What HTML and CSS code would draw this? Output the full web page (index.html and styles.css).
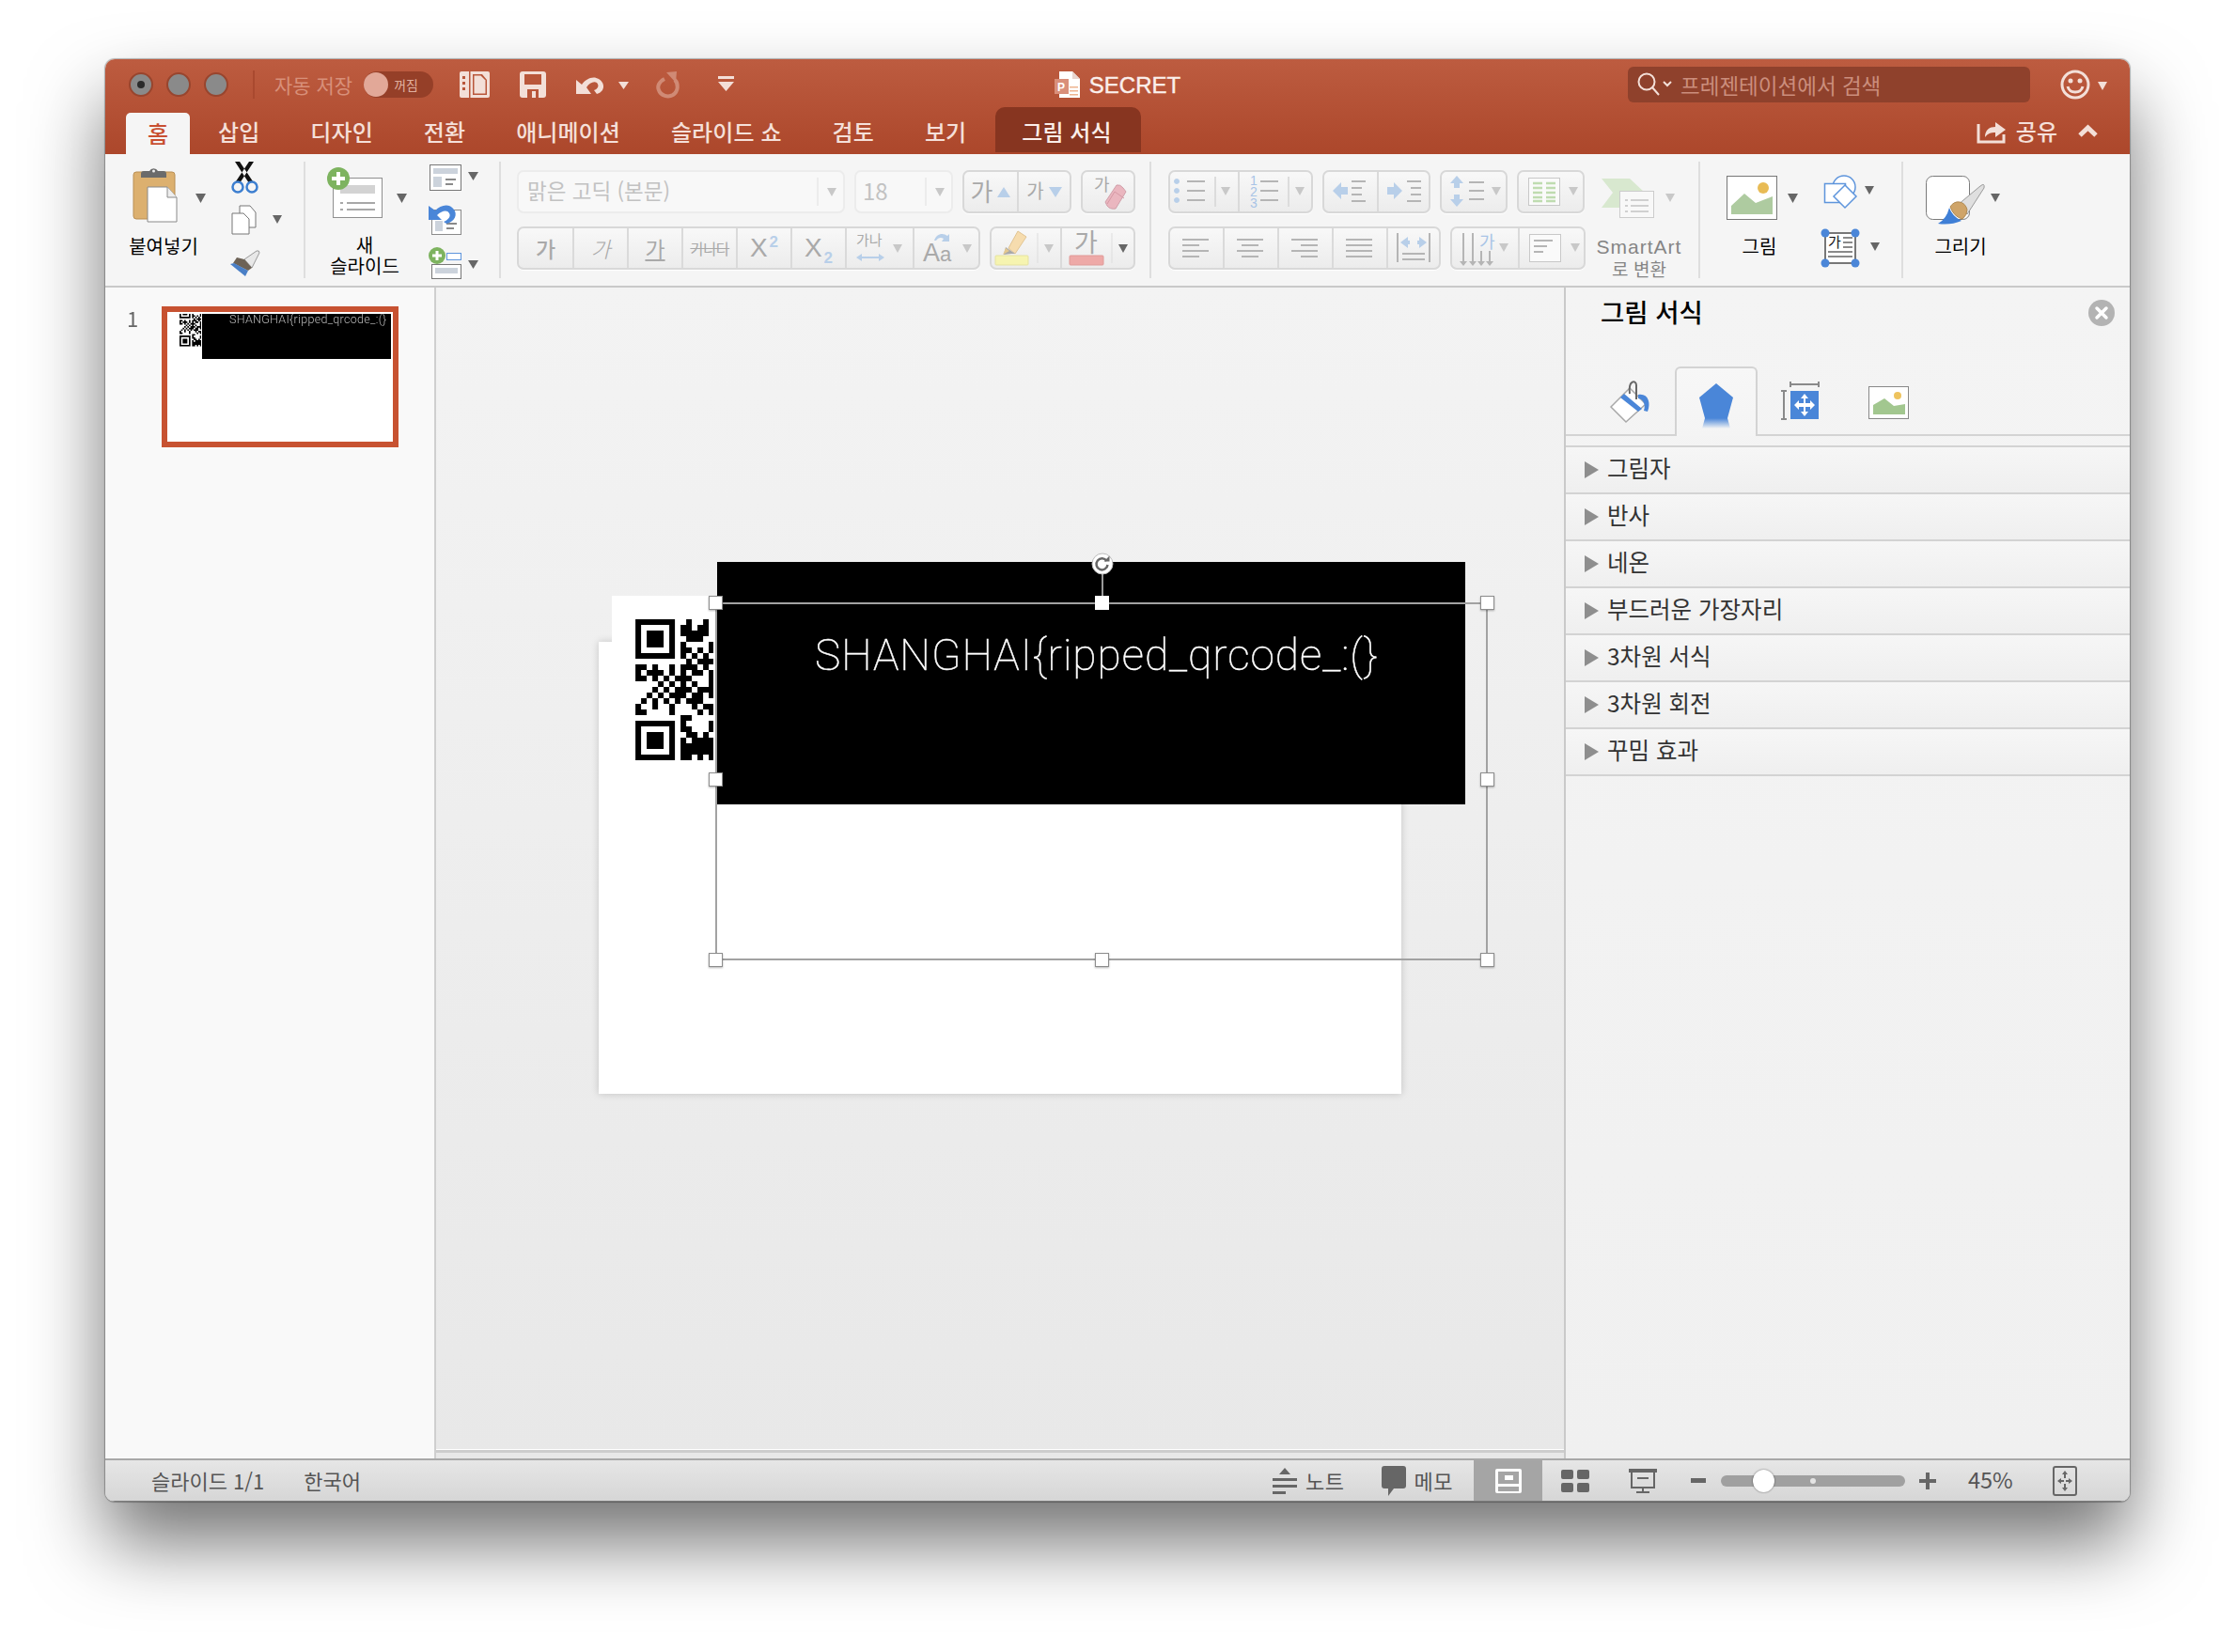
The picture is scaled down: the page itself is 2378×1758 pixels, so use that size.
FILE: index.html
```html
<!DOCTYPE html>
<html lang="ko">
<head>
<meta charset="utf-8">
<title>SECRET</title>
<link rel="stylesheet" href="styles.css">
</head>
<body>
<svg class="defs" width="0" height="0">
  <defs>
    <symbol id="qr" viewBox="0 0 13.8 25">
      <path class="qr-path" d="M0 .5h7M9 .5h1M12 .5h1M0 1.5h1M6 1.5h1M8 1.5h2M11 1.5h2M0 2.5h1M2 2.5h3M6 2.5h1M8 2.5h5M0 3.5h1M2 3.5h3M6 3.5h1M9 3.5h3M0 4.5h1M2 4.5h3M6 4.5h1M8 4.5h1M13 4.5h1M0 5.5h1M6 5.5h1M8 5.5h2M11 5.5h1M13 5.5h1M0 6.5h7M8 6.5h1M10 6.5h1M12 6.5h1M9 7.5h1M11 7.5h2M13 7.5h1M0 8.5h2M3 8.5h1M6 8.5h1M8 8.5h3M12 8.5h1M0 9.5h1M2 9.5h3M6 9.5h1M8 9.5h1M10 9.5h2M13 9.5h1M0 10.5h2M3 10.5h1M5 10.5h1M7 10.5h3M13 10.5h1M4 11.5h1M6 11.5h1M8 11.5h1M10 11.5h1M13 11.5h1M3 12.5h1M5 12.5h1M7 12.5h3M11 12.5h3M2 13.5h1M4 13.5h1M6 13.5h3M10 13.5h2M13 13.5h1M1 14.5h1M3 14.5h1M5 14.5h1M7 14.5h1M9 14.5h3M0 15.5h1M3 15.5h1M6 15.5h1M10 15.5h1M12 15.5h2M0 16.5h2M6 16.5h1M11 16.5h1M13 16.5h1M8 17.5h2M0 18.5h7M8 18.5h1M13 18.5h1M0 19.5h1M6 19.5h1M8 19.5h2M13 19.5h1M0 20.5h1M2 20.5h3M6 20.5h1M9 20.5h2M12 20.5h1M0 21.5h1M2 21.5h3M6 21.5h1M8 21.5h1M10 21.5h4M0 22.5h1M2 22.5h3M6 22.5h1M8 22.5h6M0 23.5h1M6 23.5h1M8 23.5h6M0 24.5h7M8 24.5h2M11 24.5h1M13 24.5h1"/>
    </symbol>
    <linearGradient id="fade" x1="0" y1="0" x2="0" y2="1">
      <stop offset="0" stop-color="#4a86d8"/>
      <stop offset="1" stop-color="#4a86d8" stop-opacity="0"/>
    </linearGradient>
  </defs>
</svg>

<div class="window">
  <header class="titlebar">
    <div class="toprow">
      <div class="top-left">
        <span class="light light-on"></span>
        <span class="light"></span>
        <span class="light"></span>
        <span class="tb-sep"></span>
        <span class="autosave">자동 저장</span>
        <span class="toggle"><i class="knob"></i><b>꺼짐</b></span>
        <svg class="qa-layout" width="32" height="28"><path class="tb-w" d="M2 0h28a2 2 0 0 1 2 2v24a2 2 0 0 1-2 2H2a2 2 0 0 1-2-2V2a2 2 0 0 1 2-2z"/><path class="tb-r" d="M10 0h1.500v28H10zM14 3h10l5 6v16H14zM3 5h3v3H3zM3 11h3v3H3zM3 17h3v3H3z"/><path class="tb-w" d="M15.500 4.500h7l5 5v14h-12z"/></svg>
        <svg class="qa-save" width="28" height="28"><path class="tb-w" d="M3 0h22a3 3 0 0 1 3 3v22a3 3 0 0 1-3 3H3a3 3 0 0 1-3-3V3a3 3 0 0 1 3-3z"/><path class="tb-r" d="M5 3h18v11H5zM8 19h12v9H8z"/><path class="tb-w" d="M13 21h4v7h-4z"/></svg>
        <svg class="qa-undo" width="60" height="24"><path class="tb-w" d="M0 22V7l6 5C10 6 18 2 24 6c8 5 6 14-2 16l-3-4c4-1 6-5 3-8-3-2-8 0-11 5l5 7z"/><path class="tb-w" d="M45 9h11l-5.500 8z"/></svg>
        <svg class="qa-redo" width="28" height="28"><path class="tb-dim-s" d="M9 8C3 11 1 16 3 20c2 6 10 8 15 5 6-4 6-12 2-16"/><path class="tb-dim" d="M11 1l11-1-1 12z"/></svg>
        <svg class="qa-more" width="17" height="18"><path class="tb-w" d="M0 0h17v3H0zM0 6h17l-8.500 10z"/></svg>
      </div>
      <div class="doc-title">
        <svg width="27" height="28"><path class="white" d="M5 0h14l8 8v20H5z"/><path class="doc-fold" d="M19 0v8h8z"/><path class="doc-p" d="M0 8h15v16H0z"/><path class="doc-line" d="M16 16h9v1.500h-9zM16 20h9v1.500h-9zM16 24h9v1.500h-9z"/><text x="3" y="21" class="doc-letter">P</text></svg>
        <span>SECRET</span>
      </div>
      <div class="top-right">
        <div class="search">
          <svg width="42" height="28"><circle class="tb-s" cx="11" cy="11" r="8.500"/><path class="tb-s" d="M17 17l7 8M29 11l4 4 4-4"/></svg>
          <span>프레젠테이션에서 검색</span>
        </div>
        <svg class="smile" width="50" height="32"><circle class="tb-s2" cx="16" cy="16" r="14"/><circle class="tb-f" cx="11" cy="12" r="2.500"/><circle class="tb-f" cx="21" cy="12" r="2.500"/><path class="tb-s2" d="M8 18c2 8 14 8 16 0"/><path class="tb-w" d="M40 13h10l-5 9z"/></svg>
      </div>
    </div>
    <nav class="tabrow">
      <a class="tab tab-home">홈</a>
      <a class="tab">삽입</a>
      <a class="tab">디자인</a>
      <a class="tab">전환</a>
      <a class="tab">애니메이션</a>
      <a class="tab">슬라이드 쇼</a>
      <a class="tab">검토</a>
      <a class="tab">보기</a>
      <a class="tab tab-context">그림 서식</a>
      <div class="share">
        <svg width="30" height="26"><path class="tb-s2" d="M1 6v19h27v-8"/><path class="tb-w" d="M8 20c0-8 5-11 11-11V4l11 8-11 8v-5c-5 0-8 1-11 5z"/></svg>
        <span>공유</span>
        <svg class="chev" width="21" height="13"><path class="tb-s3" d="M2 11l8.500-8 8.500 8"/></svg>
      </div>
    </nav>
  </header>

  <section class="ribbon">
    <div class="group g-clip">
      <div class="big w-124">
        <svg width="124" height="70">
          <rect x="30" y="11" width="44" height="50" rx="3" fill="#dcb06f" stroke="#b98f55"/>
          <path d="M38 17v-4a3 3 0 0 1 3-3h6a5 5 0 0 1 9 0h6a3 3 0 0 1 3 3v4z" fill="#6b6b6b"/>
          <circle cx="51.500" cy="10" r="1.500" fill="#eee"/>
          <path d="M45 27h21l10 11v26H45z" fill="#fff" stroke="#8a8a8a"/>
          <path d="M66 27v11h10" fill="#eee" stroke="#8a8a8a"/>
          <path class="c-dark" d="M96 34h11l-5.500 10z"/>
        </svg>
        <span class="lbl">붙여넣기</span>
      </div>
      <div class="col-small col-clip">
        <svg width="60" height="36">
          <path d="M10 0l15 23 4-2L15 0zM30 0L15 23l-4-2L25 0z" fill="#111"/>
          <circle cx="13" cy="27" r="5.500" fill="none" stroke="#3d7fd0" stroke-width="2.500"/>
          <circle cx="28" cy="27" r="5.500" fill="none" stroke="#3d7fd0" stroke-width="2.500"/>
        </svg>
        <svg width="60" height="36">
          <path d="M15 3h11l6 7v16H15z" fill="#fff" stroke="#777"/>
          <path d="M7 11h12l6 6v16H7z" fill="#fff" stroke="#777"/>
          <path class="c-dark" d="M50 13h10l-5 9z"/>
        </svg>
        <svg width="60" height="32">
          <path d="M20 12L33 3q3-1 3 2L28 21z" fill="#e8e8e8" stroke="#999"/>
          <path d="M12 10l8 2 8 9-4 3L8 16z" fill="#6d6256"/>
          <path d="M5 17l4-1 15 8-3 6z" fill="#4a7fc6"/>
        </svg>
      </div>
    </div>

    <div class="group g-slide">
      <div class="big w-126">
        <svg width="126" height="70">
          <rect x="29.500" y="17.500" width="52" height="42" fill="#fff" stroke="#8f8f8f"/>
          <rect x="37" y="25" width="37" height="9" fill="#d3d3d3"/>
          <path d="M37 43h3v2h-3zM44 43h30v2H44zM37 50h3v2h-3zM44 50h30v2H44z" fill="#a8a8a8"/>
          <circle cx="35" cy="18" r="12" fill="#7db35f"/>
          <path d="M33 11h4v5h5v4h-5v5h-4v-5h-5v-4h5z" fill="#fff"/>
          <path class="c-dark" d="M97 34h11l-5.500 10z"/>
        </svg>
        <span class="lbl lbl-stack">새<br>슬라이드</span>
      </div>
      <div class="col-small col-slide">
        <svg width="62" height="34">
          <rect x="6.500" y="3.500" width="33" height="27" fill="#fff" stroke="#777"/>
          <rect x="10" y="7" width="26" height="6" fill="#ccd3dc"/>
          <rect x="10" y="16" width="9" height="11" fill="#ccd3dc"/>
          <path d="M23 18h11v2H23zM23 23h8v2h-8z" fill="#8a8a8a"/>
          <path class="c-dark" d="M47 11h11l-5.500 9z"/>
        </svg>
        <svg width="62" height="38">
          <rect x="8.500" y="9.500" width="31" height="26" fill="#fff" stroke="#8a8a8a"/>
          <rect x="12" y="21" width="8" height="11" fill="#ccd3dc"/>
          <path d="M24 23h11v2H24zM24 28h8v2h-8z" fill="#8a8a8a"/>
          <path d="M5 5v15h14l-5-5c5-5 11-6 13-2 2 3-1 7-6 9l3 2c9-2 12-10 8-15-5-7-14-5-20 1z" fill="#4a86d8"/>
        </svg>
        <svg width="62" height="40">
          <rect x="8.500" y="21.500" width="31" height="15" fill="#fff" stroke="#777"/>
          <rect x="12" y="25" width="24" height="6" fill="#ccd3dc"/>
          <rect x="24.500" y="9.500" width="15" height="7" fill="#fff" stroke="#5e95dc"/>
          <circle cx="14" cy="12" r="9" fill="#7db35f"/>
          <path d="M12.500 7h3v3.500H19v3h-3.500V17h-3v-3.500H9v-3h3.500z" fill="#fff"/>
          <path class="c-dark" d="M47 17h11l-5.500 9z"/>
        </svg>
      </div>
    </div>

    <div class="group g-font rows">
      <div class="brow">
        <div class="combo combo-font"><span>맑은 고딕 (본문)</span><i class="combo-div"></i><svg width="10" height="9"><path class="c-dim" d="M0 0h10l-5 9z"/></svg></div>
        <div class="combo combo-size"><span>18</span><i class="combo-div"></i><svg width="10" height="9"><path class="c-dim" d="M0 0h10l-5 9z"/></svg></div>
        <div class="bgroup">
          <div class="cell w-56"><span class="g g-26 lift">가</span><svg width="14" height="11"><path class="b-dim" d="M7 0l7 11H0z"/></svg></div>
          <div class="cell w-56"><span class="g g-20 lift">가</span><svg width="14" height="11"><path class="b-dim" d="M0 0h14L7 11z"/></svg></div>
        </div>
        <div class="bgroup">
          <div class="cell w-54"><svg width="54" height="42"><text class="g-text" x="12" y="20">가</text><path d="M24 32l12-18q4-1 7 3l3 4-11 18q-6 1-9-3z" fill="#eab6bf" stroke="#d0a0aa"/><path d="M26 34l8-13 10 7" fill="none" stroke="#d699a5"/></svg></div>
        </div>
      </div>
      <div class="brow">
        <div class="bgroup">
          <div class="cell w-57"><span class="g g-24 fat">가</span></div>
          <div class="cell w-58"><span class="g g-24 slant">가</span></div>
          <div class="cell w-58"><span class="g g-24 under">가</span></div>
          <div class="cell w-58"><span class="g g-18 strike">가나다</span></div>
          <div class="cell w-58"><span class="g g-28">X<sup class="blue">2</sup></span></div>
          <div class="cell w-58"><span class="g g-28">X<sub class="blue">2</sub></span></div>
          <div class="cell w-72"><svg width="72" height="42"><text class="g-text-sm" x="11" y="18">가나</text><path class="b-dim" d="M11 31l6-4v3h18v-3l6 4-6 4v-3H17v3z"/><path class="c-dim" d="M50 17h10l-5 9z"/></svg></div>
          <div class="cell w-70"><svg width="70" height="42"><text class="g-aa" x="10" y="35">A</text><text class="g-aa-s" x="28" y="35">a</text><path d="M22 13c2-7 9-9 14-5l2-2v8h-8l2-3c-3-2-6-1-8 2z" fill="#b8cfe9"/><path class="c-dim" d="M52 17h10l-5 9z"/></svg></div>
        </div>
        <div class="bgroup">
          <div class="cell w-73"><svg width="73" height="42"><rect x="4" y="29" width="35" height="10" rx="1" fill="#f6f4b0" stroke="#e6e3a0"/><path d="M18 21L28 3l9 6-12 18z" fill="#f6dcae" stroke="#e0c493"/><path d="M15 20l10 7-4 0-8 1z" fill="#a8a8a8"/><path d="M12 28l3-7 4 3z" fill="#e3c88f"/><path d="M49 5v32" stroke="#ddd" fill="none"/><path class="c-dim" d="M56 17h10l-5 9z"/></svg></div>
          <div class="cell w-78"><svg width="78" height="42"><text class="g-text-lg" x="14" y="25">가</text><rect x="9" y="29" width="36" height="10" rx="1" fill="#eea9a7" stroke="#e09a98"/><path d="M54 5v32" stroke="#ddd" fill="none"/><path class="c-dark" d="M61 17h10l-5 9z"/></svg></div>
        </div>
      </div>
    </div>

    <div class="group g-para">
      <div class="rows">
        <div class="brow">
          <div class="bgroup">
            <div class="cell w-72"><svg width="72" height="42"><path class="blue-f" d="M7 7a3 3 0 1 0 .01 0M7 17a3 3 0 1 0 .01 0M7 27a3 3 0 1 0 .01 0"/><path class="ln" d="M18 10h19M18 20h19M18 30h19"/><path class="dv" d="M48 5v32"/><path class="c-dim" d="M54 16h10l-5 9z"/></svg></div>
            <div class="cell w-78"><svg width="76" height="42"><text class="num" x="11" y="14">1</text><text class="num" x="11" y="26">2</text><text class="num" x="11" y="38">3</text><path class="ln" d="M22 10h19M22 20h19M22 30h19"/><path class="dv" d="M52 5v32"/><path class="c-dim" d="M59 16h10l-5 9z"/></svg></div>
          </div>
          <div class="bgroup">
            <div class="cell w-56"><svg width="56" height="42"><path class="blue-f" d="M9 20l9-9v5h7v8h-7v5z"/><path class="ln" d="M29 10h15M29 17h11M29 24h11M29 31h15"/></svg></div>
            <div class="cell w-55"><svg width="53" height="42"><path class="blue-f" d="M25 20l-9-9v5H9v8h7v5z"/><path class="ln" d="M30 10h15M34 17h11M34 24h11M30 31h15"/></svg></div>
          </div>
          <div class="bgroup">
            <div class="cell w-68"><svg width="68" height="42"><path class="blue-f" d="M16 4l7 8h-4v5h-6v-5H9zM16 37l-7-8h4v-5h6v5h4z"/><path class="ln" d="M29 11h16M29 20h16M29 29h16"/><path class="c-dim" d="M53 16h10l-5 9z"/></svg></div>
          </div>
          <div class="bgroup">
            <div class="cell w-68"><svg width="68" height="42"><rect x="10.500" y="6.500" width="33" height="29" fill="#fafafa" stroke="#c8c8c8"/><path class="green-l" d="M15 12h10M29 12h10M15 17h10M29 17h10M15 22h10M29 22h10M15 27h10M29 27h10M15 31h10M29 31h10"/><path class="c-dim" d="M53 16h10l-5 9z"/></svg></div>
          </div>
        </div>
        <div class="brow">
          <div class="bgroup">
            <div class="cell w-56"><svg width="56" height="42"><path class="ln" d="M13 12h28M13 18h18M13 24h28M13 30h18"/></svg></div>
            <div class="cell w-58"><svg width="56" height="42"><path class="ln" d="M13 12h28M18 18h18M13 24h28M18 30h18"/></svg></div>
            <div class="cell w-58"><svg width="56" height="42"><path class="ln" d="M13 12h28M23 18h18M13 24h28M23 30h18"/></svg></div>
            <div class="cell w-58"><svg width="56" height="42"><path class="ln" d="M13 12h28M13 18h28M13 24h28M13 30h28"/></svg></div>
            <div class="cell w-56"><svg width="54" height="42"><path class="ln" d="M10 5v31M44 5v31M15 27h24M15 33h24"/><path class="blue-f" d="M13 15l8-6v4h2v4h-2v4zM41 15l-8-6v4h-2v4h2v4z"/></svg></div>
          </div>
          <div class="bgroup">
            <div class="cell w-70"><svg width="70" height="42"><path class="ln" d="M12 5v32M22 5v32M31 24v13M40 24v13"/><path class="arrow-d" d="M8 35h8l-4 5zM18 35h8l-4 5zM27 35h8l-4 5zM36 35h8l-4 5z"/><text class="g-blue" x="29" y="21">가</text><path class="c-dim" d="M50 16h10l-5 9z"/></svg></div>
            <div class="cell w-70"><svg width="68" height="42"><rect x="10.500" y="6.500" width="33" height="29" fill="#fafafa" stroke="#c8c8c8"/><path class="ln" d="M15 13h20M15 19h14M15 25h10"/><path class="c-dim" d="M54 16h10l-5 9z"/></svg></div>
          </div>
        </div>
      </div>
      <div class="big w-114">
        <svg width="114" height="70">
          <path d="M17 18h30l16 15-16 16H17l12-16z" fill="#d8e8cf"/>
          <rect x="36.500" y="31.500" width="36" height="28" fill="#f8f8f8" stroke="#ccc"/>
          <path d="M42 40h3v2h-3zM48 40h19v2H48zM42 46h3v2h-3zM48 46h19v2H48zM42 52h3v2h-3zM48 52h19v2H48z" fill="#d0d0d0"/>
          <path class="c-dim" d="M85 34h10l-5 9z"/>
        </svg>
        <span class="lbl lbl-gray"><span class="lbl-latin">SmartArt</span><br>로 변환</span>
      </div>
    </div>

    <div class="group g-pic">
      <div class="big w-126">
        <svg width="126" height="70">
          <rect x="28.500" y="15.500" width="53" height="46" fill="#fff" stroke="#777"/>
          <path d="M33 56V47l14-13 12 10 18-7v19z" fill="#aecba0"/>
          <circle cx="67" cy="28" r="6" fill="#e8bb55"/>
          <path class="c-dark" d="M93 34h11l-5.500 10z"/>
        </svg>
        <span class="lbl">그림</span>
      </div>
      <div class="col-small col-pic">
        <svg width="66" height="50">
          <circle cx="27" cy="27" r="12" fill="#fff" stroke="#5e95dc" stroke-width="1.500"/>
          <rect x="6.500" y="23.500" width="22" height="20" fill="#fff" stroke="#5e95dc" stroke-width="1.500"/>
          <path d="M28 25l12 12-12 12-12-12z" fill="#fff" stroke="#5e95dc" stroke-width="1.500"/>
          <path class="c-dark" d="M49 26h10l-5 9z"/>
        </svg>
        <svg width="66" height="48">
          <rect x="7" y="8" width="32" height="32" fill="#fff" stroke="#777" stroke-width="2"/>
          <text class="g-black" x="10" y="23">가</text>
          <path class="ln-d" d="M26 13h10M26 18h10M26 23h10M10 28h26M10 33h26"/>
          <circle cx="7" cy="8" r="4.500" fill="#4a86d8"/><circle cx="39" cy="8" r="4.500" fill="#4a86d8"/><circle cx="7" cy="40" r="4.500" fill="#4a86d8"/><circle cx="39" cy="40" r="4.500" fill="#4a86d8"/>
          <path class="c-dark" d="M55 18h10l-5 9z"/>
        </svg>
      </div>
    </div>

    <div class="group g-draw">
      <div class="big w-122">
        <svg width="122" height="70">
          <rect x="24.500" y="15.500" width="46" height="46" rx="7" fill="#fff" stroke="#7a7a7a"/>
          <path d="M58 46l24-20q5-4 4 2L68 56z" fill="#dfdfdf" stroke="#9a9a9a"/>
          <path d="M50 48q4-6 10-5t8 8q0 6-5 10-9-2-13-13z" fill="#cfa468" stroke="#b08a52"/>
          <path d="M49 49q3 9 13 14-12 5-25 3 9-5 12-17z" fill="#3f7fd6"/>
          <path class="c-dark" d="M93 34h10l-5 9z"/>
        </svg>
        <span class="lbl">그리기</span>
      </div>
    </div>
  </section>

  <main class="work">
    <aside class="thumbs">
      <span class="thumb-no">1</span>
      <div class="thumb">
        <svg class="thumb-qr" width="23" height="36" viewBox="0 4.150 13.800 21.600"><use href="#qr" width="13.800" height="25"/></svg>
        <div class="thumb-black"><span>SHANGHAI{ripped_qrcode_:(}</span></div>
      </div>
    </aside>

    <div class="canvas">
      <div class="slide"></div>
      <div class="qr-paper"></div>
      <svg class="qr" width="83" height="150"><use href="#qr" width="83" height="150"/></svg>
      <div class="banner"><span>SHANGHAI{ripped_qrcode_:(}</span></div>
      <div class="selection">
        <i class="stem"></i>
        <svg class="rotate" width="24" height="24"><circle cx="12" cy="12" r="11" fill="#fff" stroke="#bbb"/><path d="M16.500 9a6 6 0 1 0 1 4" fill="none" stroke="#666" stroke-width="2.500"/><path d="M13.500 9.500h6v-6z" fill="#666"/></svg>
        <i class="h h-tl"></i><i class="h h-tc"></i><i class="h h-tr"></i>
        <i class="h h-ml"></i><i class="h h-mr"></i>
        <i class="h h-bl"></i><i class="h h-bc"></i><i class="h h-br"></i>
      </div>
      <div class="hscroll"></div>
    </div>

    <aside class="panel">
      <div class="panel-head">
        <h2>그림 서식</h2>
        <svg width="28" height="28"><circle cx="14" cy="14" r="14" fill="#b3b3b3"/><path d="M9 9l10 10M19 9L9 19" stroke="#fff" stroke-width="3.500" stroke-linecap="round"/></svg>
      </div>
      <div class="panel-tabs">
        <div class="ptab ptab-fill">
          <svg width="46" height="46"><path d="M1 29L21 9l17 17-21 19z" fill="#fff" stroke="#a8a8a8" stroke-width="1.500"/><path d="M11 19l4-4 19 16-4 3z" fill="#4a86d8"/><path d="M21 15C19 0 28 0 28 6v15" fill="none" stroke="#666" stroke-width="2"/><path d="M30 16c10-2 14 8 10 18l-4-1c2-6 0-12-6-13z" fill="#4a86d8"/></svg>
        </div>
        <div class="ptab ptab-on">
          <svg width="37" height="48"><path d="M18 0l18 15-6 22H6L0 15z" fill="#4a86d8"/><path d="M6 37h24l3 11H3z" fill="url(#fade)"/></svg>
        </div>
        <div class="ptab ptab-size">
          <svg width="42" height="42"><path d="M10 0v6M40 0v6M10 3h30M0 10h6M0 40h6M3 10v30" stroke="#8a8a8a" stroke-width="2" fill="none"/><rect x="10" y="10" width="30" height="30" fill="#4a86d8"/><path d="M25 13l4 5h-3v5h5v-3l5 5-5 5v-3h-5v5h3l-4 5-4-5h3v-5h-5v3l-5-5 5-5v3h5v-5h-3z" fill="#fff"/></svg>
        </div>
        <div class="ptab ptab-pic">
          <svg width="43" height="35"><rect x=".5" y=".5" width="42" height="34" fill="#fff" stroke="#888"/><path d="M5 30V20l12-7 10 8 12-2v11z" fill="#a2c78f"/><circle cx="31" cy="10" r="4" fill="#eec35e"/></svg>
        </div>
      </div>
      <ul class="sections">
        <li><i class="tri"></i><span>그림자</span></li>
        <li><i class="tri"></i><span>반사</span></li>
        <li><i class="tri"></i><span>네온</span></li>
        <li><i class="tri"></i><span>부드러운 가장자리</span></li>
        <li><i class="tri"></i><span>3차원 서식</span></li>
        <li><i class="tri"></i><span>3차원 회전</span></li>
        <li><i class="tri"></i><span>꾸밈 효과</span></li>
      </ul>
    </aside>
  </main>

  <footer class="status">
    <span class="st-slide">슬라이드 1/1</span>
    <span class="st-lang">한국어</span>
    <div class="st-notes">
      <svg width="26" height="30"><path class="st-f" d="M13 1l6 7H7zM0 12h26v3H0zM0 19h26v3H0zM0 26h14v3H0z"/></svg>
      <span>노트</span>
    </div>
    <div class="st-memo">
      <svg width="26" height="32"><path class="st-f" d="M3 0h20a3 3 0 0 1 3 3v18a3 3 0 0 1-3 3H13l-6 8v-8H3a3 3 0 0 1-3-3V3a3 3 0 0 1 3-3z"/></svg>
      <span>메모</span>
    </div>
    <div class="st-view">
      <svg width="28" height="26"><rect width="28" height="26" rx="2" fill="#fff"/><rect x="3" y="3" width="22" height="13" fill="#a5a5a5"/><rect x="10" y="7" width="9" height="5" fill="#fff"/><rect x="3" y="19" width="22" height="5" fill="#a5a5a5"/></svg>
    </div>
    <svg class="st-grid" width="30" height="26"><path class="st-f" d="M2 1h9a2 2 0 0 1 2 2v6a2 2 0 0 1-2 2H2a2 2 0 0 1-2-2V3a2 2 0 0 1 2-2zM19 1h9a2 2 0 0 1 2 2v6a2 2 0 0 1-2 2h-9a2 2 0 0 1-2-2V3a2 2 0 0 1 2-2zM2 15h9a2 2 0 0 1 2 2v6a2 2 0 0 1-2 2H2a2 2 0 0 1-2-2v-6a2 2 0 0 1 2-2zM19 15h9a2 2 0 0 1 2 2v6a2 2 0 0 1-2 2h-9a2 2 0 0 1-2-2v-6a2 2 0 0 1 2-2z"/></svg>
    <svg class="st-show" width="30" height="26"><path class="st-f" d="M0 0h30v4H0zM2 4h2v15h22V4h2v17H16v3h6v2H8v-2h6v-3H2zM9 9h12v2H9z"/></svg>
    <svg class="st-minus" width="16" height="6"><path class="st-f" d="M0 0h16v5H0z"/></svg>
    <div class="slider"><i class="slider-dot"></i><i class="slider-thumb"></i></div>
    <svg class="st-plus" width="18" height="18"><path class="st-f" d="M7 0h4v7h7v4h-7v7H7v-7H0V7h7z"/></svg>
    <span class="st-zoom">45%</span>
    <svg class="st-fit" width="26" height="32"><rect x="1" y="1" width="24" height="30" rx="2" fill="none" stroke="#666" stroke-width="2"/><path class="st-f" d="M13 5l3 4h-2v4h-2V9h-2zM13 27l-3-4h2v-4h2v4h2zM5 16l4-3v2h3v2H9v2zM21 16l-4 3v-2h-3v-2h3v-2z"/></svg>
    <i class="st-end"></i>
  </footer>
</div>
</body>
</html>
```

FILE: styles.css
```css
* { box-sizing: border-box; }
html, body { margin: 0; padding: 0; }
body {
  width: 2378px;
  height: 1758px;
  overflow: hidden;
  background: #fff;
  padding: 63px 112px 0;
  font-family: "Noto Sans CJK KR", "Liberation Sans", sans-serif;
  color: #000;
}
.defs { position: absolute; }
.qr-path { fill: none; stroke: #000; stroke-width: 1; }
svg { display: block; flex: none; overflow: visible; }

.window {
  width: 2154px;
  height: 1535px;
  border-radius: 10px;
  display: flex;
  flex-direction: column;
  overflow: hidden;
  box-shadow: 0 44px 80px rgba(0,0,0,.55), 0 0 1px 1px rgba(0,0,0,.28);
  background: #f5f5f5;
}

/* title bar */
.titlebar {
  height: 101px;
  flex: none;
  background: linear-gradient(#bd5c40, #ac472b);
  display: flex;
  flex-direction: column;
}
.toprow {
  height: 51px;
  padding-top: 3px;
  display: grid;
  grid-template-columns: 1fr auto 1fr;
  align-items: center;
}
.top-left { display: flex; align-items: center; padding-left: 25px; }
.light {
  width: 26px; height: 26px; border-radius: 50%;
  background: #8a8a8a;
  border: 2px solid #98452e;
  margin-right: 14px;
  position: relative;
}
.light-on::after {
  content: ""; position: absolute; left: 7px; top: 7px;
  width: 8px; height: 8px; border-radius: 50%; background: #2b2b2b;
}
.tb-sep { width: 2px; height: 30px; background: #a9492f; margin-left: 12px; }
.autosave { font-size: 21px; color: #d8907a; margin-left: 21px; line-height: 28px; white-space: nowrap; }
.toggle {
  width: 74px; height: 28px; border-radius: 14px;
  background: #953f28; margin-left: 12px;
  display: flex; align-items: center;
}
.knob { width: 26px; height: 26px; border-radius: 50%; background: #e2a898; }
.toggle b { font-weight: 400; font-size: 14px; color: #e0b0a0; margin-left: 6px; line-height: 1; }
.qa-layout { margin-left: 28px; }
.qa-save { margin-left: 32px; }
.qa-undo { margin-left: 32px; }
.qa-redo { margin-left: 25px; }
.qa-more { margin-left: 38px; }
.tb-w { fill: #f3dfd8; }
.tb-r { fill: #b9563a; }
.tb-dim { fill: #d08a75; }
.tb-dim-s { fill: none; stroke: #d08a75; stroke-width: 4; }
.tb-s { fill: none; stroke: #f3dfd8; stroke-width: 2; }
.tb-s2 { fill: none; stroke: #f3dfd8; stroke-width: 3; }
.tb-s3 { fill: none; stroke: #f3dfd8; stroke-width: 5; }
.tb-f { fill: #f3dfd8; }
.white { fill: #fff; }
.doc-fold { fill: #e8d5cf; }
.doc-p { fill: #d98f7a; }
.doc-line { fill: #eeb490; }
.doc-letter { font: 700 12px "Liberation Sans", sans-serif; fill: #fff; }

.doc-title { display: flex; align-items: center; gap: 10px; color: #fbf0ec; }
.doc-title span { font: 24px/28px "Liberation Sans", sans-serif; padding-top: 2px; -webkit-text-stroke: .4px #fbf0ec; }

.top-right { display: flex; align-items: center; justify-content: flex-end; padding-right: 24px; }
.search {
  width: 428px; height: 38px; border-radius: 6px;
  background: #8f412c;
  display: flex; align-items: center;
  padding-left: 9px;
}
.search span { font-size: 22.500px; color: #cb8e7d; margin-left: 5px; line-height: 38px; white-space: nowrap; }
.smile { margin-left: 32px; }

.tabrow { height: 50px; display: flex; align-items: flex-end; padding-left: 22px; }
.tab {
  height: 48px;
  margin-bottom: 2px;
  padding: 3px 27px 0;
  display: flex; align-items: center;
  font-size: 24px; line-height: 1;
  letter-spacing: .08px;
  font-weight: 500;
  color: #f5e0da;
  white-space: nowrap;
}
.tab-home {
  height: 44px; margin: 0 3px 0 0; padding: 0;
  width: 68px; justify-content: center;
  background: #f5f5f5; color: #c84f31;
  border-radius: 5px 5px 0 0;
}
.tab-context {
  margin-left: 4px; padding: 3px 31px 0 28px;
  background: #873520; color: #fbeee9;
  border-radius: 10px 10px 0 0;
}
.share {
  margin-left: auto; height: 50px; padding: 0 34px 0 0;
  display: flex; align-items: center; color: #f5e0da; font-size: 24px; font-weight: 500;
}
.share span { margin-left: 11px; line-height: 1; }
.chev { margin-left: 22px; }

/* ribbon */
.ribbon {
  height: 142px;
  flex: none;
  display: flex;
  background: #f5f5f5;
  border-bottom: 2px solid #c9c9c9;
  padding-top: 8px;
}
.group {
  height: 124px;
  display: flex;
  border-right: 2px solid #dedede;
}
.g-clip { width: 213px; }
.g-slide { width: 208px; }
.g-font { width: 692px; padding-left: 17px; }
.g-para { width: 584px; padding-left: 18px; }
.g-pic { width: 216px; }
.g-draw { flex: 1; border-right: 0; }

.big { display: flex; flex-direction: column; align-items: center; }
.w-124 { width: 124px; }
.w-126 { width: 126px; }
.w-114 { width: 114px; }
.w-122 { width: 122px; }
.lbl { font-size: 20px; line-height: 24px; margin-top: 8px; white-space: nowrap; text-align: center; }
.lbl-stack { line-height: 22px; }
.lbl-gray { color: #858585; font-size: 19px; line-height: 23px; }
.lbl-latin { font: 21px/23px "Liberation Sans", sans-serif; letter-spacing: 1px; }
.col-small { display: flex; flex-direction: column; }
.col-clip { padding-left: 4px; gap: 8px; }
.col-clip svg:last-child { margin-top: 4px; }
.col-slide { gap: 8px; }
.col-pic { gap: 18px; }

.rows { display: flex; flex-direction: column; gap: 14px; padding-top: 9px; }
.brow { display: flex; gap: 10px; height: 46px; }
.combo {
  height: 46px; border: 2px solid #ececec; border-radius: 7px;
  background: #f8f8f8; color: #c2c2c2;
  display: flex; align-items: center;
}
.combo-font { width: 349px; padding-left: 9px; font-size: 22.500px; }
.combo-size { width: 105px; padding-left: 7px; font-size: 24px; }
.combo span { flex: 1; line-height: 1; white-space: nowrap; padding-bottom: 3px; }
.combo-div { width: 2px; height: 30px; background: #ececec; margin-right: 9px; }
.combo svg { margin-right: 7px; }
.bgroup {
  height: 46px; display: flex; flex: none;
  border: 2px solid #d8d8d8; border-radius: 7px;
  background: linear-gradient(#f8f8f8, #ececec);
  box-shadow: 0 1px 1px #fff;
}
.cell {
  height: 42px; display: flex; align-items: center; justify-content: center; gap: 5px;
  border-left: 2px solid #dadada;
}
.cell:first-child { border-left: 0; }
.w-54 { width: 54px; }
.w-55 { width: 55px; }
.w-56 { width: 56px; }
.w-57 { width: 57px; }
.w-58 { width: 58px; }
.w-68 { width: 68px; }
.w-70 { width: 70px; }
.w-72 { width: 72px; }
.w-73 { width: 73px; }
.w-78 { width: 78px; }

.g { color: #a9a9a9; line-height: 1; white-space: nowrap; }
.lift { padding-bottom: 2px; }
.g-18 { font-size: 16px; letter-spacing: -1px; }
.g-20 { font-size: 20px; }
.g-24 { font-size: 23px; }
.g-26 { font-size: 26px; }
.g-28 { font-size: 28px; font-family: "Liberation Sans", sans-serif; }
.fat { font-weight: 500; }
.slant { font-style: italic; font-weight: 300; }
.under { text-decoration: underline; }
.strike { text-decoration: line-through; }
.blue { color: #b8cfe9; font-size: 17px; font-weight: 700; line-height: 0; margin-left: 2px; }
.g-text { font-size: 18px; fill: #a9a9a9; }
.g-text-sm { font-size: 15px; fill: #a9a9a9; }
.g-text-lg { font-size: 27px; fill: #a9a9a9; }
.g-blue { font-size: 18px; fill: #a9c4e6; }
.g-black { font-size: 15px; fill: #111; }
.g-aa { font: 27px "Liberation Sans", sans-serif; fill: #a9a9a9; }
.g-aa-s { font: 22px "Liberation Sans", sans-serif; fill: #a9a9a9; }
.num { font: 14px "Liberation Sans", sans-serif; fill: #a9c4e6; }
.c-dark { fill: #666; }
.c-dim { fill: #c8c8c8; }
.b-dim { fill: #b8cfe9; }
.blue-f { fill: #b8cfe9; }
.ln { fill: none; stroke: #b5b5b5; stroke-width: 2; }
.ln-d { fill: none; stroke: #8a8a8a; stroke-width: 2; }
.dv { fill: none; stroke: #dcdcdc; stroke-width: 2; }
.green-l { fill: none; stroke: #bfdcb0; stroke-width: 2.500; }
.arrow-d { fill: #b5b5b5; }

/* work area */
.work { flex: 1; min-height: 0; display: flex; }
.thumbs {
  width: 352px; flex: none;
  background: #f9f9f9;
  border-right: 2px solid #cfcfcf;
  padding: 20px 0 0 23px;
  display: flex;
  align-items: flex-start;
}
.thumb-no { font-size: 22px; color: #666; width: 37px; line-height: 1; padding-top: 1px; will-change: transform; }
.thumb {
  width: 252px; height: 150px; flex: none;
  border: 6px solid #c75231;
  background: #fff;
  position: relative;
  overflow: hidden;
}
.thumb-qr { position: absolute; left: 13px; top: 2px; overflow: hidden; }
.thumb-black {
  position: absolute; left: 37px; top: 2px; width: 201px; height: 48px;
  background: #000; overflow: hidden;
  color: #bbb; font: 300 12.500px/1 "Roboto", sans-serif; letter-spacing: .3px; white-space: nowrap;
}
.thumb-black span { position: absolute; left: 29px; top: 0; will-change: transform; }

.canvas {
  flex: 1; position: relative; overflow: hidden;
  background: linear-gradient(#f3f3f3, #e8e8e8);
}
.slide {
  position: absolute; left: 173px; top: 377px; width: 854px; height: 481px;
  background: #fff;
  box-shadow: 0 0 8px rgba(0,0,0,.18);
}
.qr-paper { position: absolute; left: 187px; top: 328px; width: 112px; height: 60px; background: #fff; }
.qr { position: absolute; left: 212px; top: 353px; overflow: hidden; }
.banner {
  position: absolute; left: 299px; top: 292px; width: 796px; height: 258px;
  background: #000; color: #fff;
  font: 100 46px/1 "Roboto", sans-serif;
  letter-spacing: 1px;
  -webkit-text-stroke: .5px #fff;
  white-space: nowrap;
}
.banner span { position: absolute; left: 104px; top: 76px; will-change: transform; }
.selection {
  position: absolute; left: 297px; top: 335px; width: 822px; height: 381px;
  border: 2px solid #a2a2a2;
}
.stem { position: absolute; left: 409px; top: -36px; width: 2px; height: 36px; background: #9a9a9a; }
.rotate { position: absolute; left: 398px; top: -55px; }
.h {
  position: absolute; width: 15px; height: 15px;
  background: #fff; border: 1px solid #8d8d8d;
  box-shadow: 0 1px 2px rgba(0,0,0,.3);
}
.h-tl { left: -9px; top: -9px; }
.h-tc { left: 402px; top: -9px; border-color: #fff; }
.h-tr { right: -9px; top: -9px; }
.h-ml { left: -9px; top: 179px; }
.h-mr { right: -9px; top: 179px; }
.h-bl { left: -9px; bottom: -9px; }
.h-bc { left: 402px; bottom: -9px; }
.h-br { right: -9px; bottom: -9px; }
.hscroll {
  position: absolute; left: 0; right: 0; bottom: 6px; height: 3px;
  background: #cdcdcd; box-shadow: 0 -1px 0 #fff;
}

/* right panel */
.panel {
  width: 602px; flex: none;
  border-left: 2px solid #c9c9c9;
  background: linear-gradient(#f4f4f4, #f0f0f0);
}
.panel-head { height: 84px; padding: 0 16px 30px 37px; display: flex; align-items: center; justify-content: space-between; }
.panel-head h2 { margin: 0 0 3px; font-weight: 500; font-size: 27.500px; line-height: 1; }
.panel-tabs {
  height: 74px; display: flex; align-items: flex-start;
  border-bottom: 2px solid #d3d3d3;
}
.ptab { height: 74px; display: flex; }
.ptab-fill { width: 116px; padding: 14px 0 0 47px; }
.ptab-on {
  width: 88px; justify-content: center; padding-top: 16px;
  border: 2px solid #d3d3d3; border-bottom: 0; border-radius: 6px 6px 0 0;
  background: linear-gradient(#f7f7f7, #f4f4f4);
}
.ptab-size { margin-left: 25px; padding-top: 16px; }
.ptab-pic { margin-left: 51px; padding-top: 21px; }
.sections { list-style: none; margin: 10px 0 0; padding: 0; border-top: 2px solid #d3d3d3; }
.sections li {
  height: 50px;
  background: linear-gradient(#f6f6f6, #efefef);
  border-bottom: 2px solid #d3d3d3;
  display: flex; align-items: center;
  padding-left: 20px;
  font-size: 24.500px; line-height: 1; color: #333;
}
.sections li span { padding-bottom: 3px; }
.tri {
  width: 0; height: 0; margin-right: 9px;
  border-left: 15px solid #8e8e8e;
  border-top: 9px solid transparent;
  border-bottom: 9px solid transparent;
}

/* status bar */
.status {
  height: 46px; flex: none;
  border-top: 2px solid #a8a8a8;
  border-bottom: 1px solid #7d7d7d;
  background: linear-gradient(#e6e6e6, #d6d6d6);
  display: flex; align-items: center;
  color: #555; font-size: 22px;
  padding-left: 49px;
  white-space: nowrap;
}
.status span { line-height: 1; padding-bottom: 2px; }
.st-lang { margin-left: 42px; }
.st-notes, .st-memo { display: flex; align-items: center; gap: 9px; color: #555; }
.st-notes span, .st-memo span { font-size: 22px; letter-spacing: .5px; }
.st-notes { margin-left: auto; }
.st-memo { margin-left: 39px; }
.st-f { fill: #666; }
.st-view {
  width: 73px; align-self: stretch; margin-left: 22px;
  background: #a5a5a5; display: flex; align-items: center; justify-content: center;
}
.st-grid { margin-left: 20px; }
.st-show { margin-left: 42px; }
.st-minus { margin-left: 36px; }
.slider {
  width: 196px; height: 12px; border-radius: 6px; background: #a0a0a0;
  margin-left: 16px; position: relative;
}
.slider-dot { position: absolute; left: 95px; top: 3px; width: 6px; height: 6px; border-radius: 50%; background: #e4e4e4; }
.slider-thumb {
  position: absolute; left: 34px; top: -6px; width: 23px; height: 24px; border-radius: 50%;
  background: #fff; box-shadow: 0 0 2px rgba(0,0,0,.6);
}
.st-plus { margin-left: 15px; }
.st-zoom { margin-left: 34px; width: 50px; font-size: 23.500px; }
.st-fit { margin-left: 40px; }
.st-end { width: 56px; flex: none; }
```
